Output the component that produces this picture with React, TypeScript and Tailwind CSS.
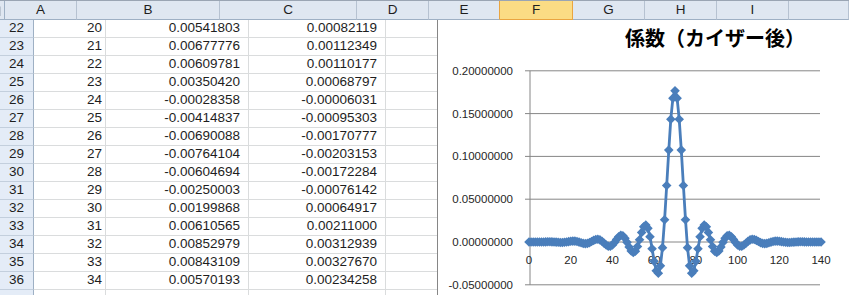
import React from 'react'

interface Col {
  label: string
  w: string
  head: string
}

const COLS: Col[] = [
  { label: 'A', w: 'w-[72px]', head: 'border-r-[#b6c2d1]' },
  { label: 'B', w: 'w-[143px]', head: 'border-r-[#b6c2d1]' },
  { label: 'C', w: 'w-[137px]', head: 'border-r-[#b6c2d1]' },
  { label: 'D', w: 'w-[72px]', head: 'border-r-[#b6c2d1]' },
  { label: 'E', w: 'w-[71px]', head: 'border-r-[#eaa540]' },
  { label: 'F', w: 'w-[73px]', head: 'border-r-[#eaa540]' },
  { label: 'G', w: 'w-[72px]', head: 'border-r-[#b6c2d1]' },
  { label: 'H', w: 'w-[72px]', head: 'border-r-[#b6c2d1]' },
  { label: 'I', w: 'w-[72px]', head: 'border-r-[#b6c2d1]' },
  { label: '', w: 'w-[60px]', head: 'border-r-[#b6c2d1]' },
]

const ROWS: [number, string, string][] = [
  [20, '0.00541803', '0.00082119'],
  [21, '0.00677776', '0.00112349'],
  [22, '0.00609781', '0.00110177'],
  [23, '0.00350420', '0.00068797'],
  [24, '-0.00028358', '-0.00006031'],
  [25, '-0.00414837', '-0.00095303'],
  [26, '-0.00690088', '-0.00170777'],
  [27, '-0.00764104', '-0.00203153'],
  [28, '-0.00604694', '-0.00172284'],
  [29, '-0.00250003', '-0.00076142'],
  [30, '0.00199868', '0.00064917'],
  [31, '0.00610565', '0.00211000'],
  [32, '0.00852979', '0.00312939'],
  [33, '0.00843109', '0.00327670'],
  [34, '0.00570193', '0.00234258'],
]

// modified bessel I0 for the kaiser window
const besselI0 = (x: number) => {
  let sum = 1
  let term = 1
  for (let k = 1; k < 30; k++) {
    term *= (x / (2 * k)) * (x / (2 * k))
    sum += term
  }
  return sum
}

const BETA = 7
const CUT = 0.1733
const coef = Array.from({ length: 141 }, (_, n) => {
  const d = n - 70
  const s = d === 0 ? CUT : Math.sin(Math.PI * CUT * d) / (Math.PI * d)
  const r = d / 70
  const w = besselI0(BETA * Math.sqrt(Math.max(0, 1 - r * r))) / besselI0(BETA)
  return 1.02 * s * w
})

const px = (i: number) => 529 + i * 2.086
const py = (v: number) => 242 - v * 856

const Y_TICKS = [0.2, 0.15, 0.1, 0.05, 0, -0.05]

function Chart() {
  const line = coef.map((v, i) => `${i === 0 ? 'M' : 'L'}${px(i).toFixed(1)},${py(v).toFixed(1)}`).join(' ')
  return (
    <div className="absolute left-[437px] top-[20px] w-[412px] h-[275px] bg-white border-l border-[#868686]">
      <svg width="411" height="275" viewBox="438 20 411 275">
        <text
          x="715"
          y="46"
          textAnchor="middle"
          fontSize="20"
          fontWeight="700"
          fontFamily='"Noto Sans CJK JP", sans-serif'
          fill="#000"
        >
          係数（カイザー後）
        </text>
        {Y_TICKS.map(v => (
          <g key={v}>
            <line x1="525" x2="820" y1={py(v)} y2={py(v)} stroke="#868686" strokeWidth="1" />
            <text
              x="513"
              y={py(v) + 4}
              textAnchor="end"
              fontSize="11.5"
              fontFamily='"Liberation Sans", sans-serif'
              fill="#262626"
            >
              {v.toFixed(8)}
            </text>
          </g>
        ))}
        <line x1="530" x2="530" y1={py(0.2)} y2={py(-0.05)} stroke="#868686" strokeWidth="1" />
        {[0, 20, 40, 60, 80, 100, 120, 140].map(t => (
          <text
            key={t}
            x={px(t)}
            y="264"
            textAnchor="middle"
            fontSize="11.5"
            fontFamily='"Liberation Sans", sans-serif'
            fill="#262626"
          >
            {t}
          </text>
        ))}
        <path d={line} fill="none" stroke="#4a7ebb" strokeWidth="2.8" strokeLinejoin="round" />
        {coef.map((v, i) => {
          const x = px(i)
          const y = py(v)
          return (
            <polygon
              key={i}
              points={`${x},${y - 4.8} ${x + 4.8},${y} ${x},${y + 4.8} ${x - 4.8},${y}`}
              fill="#4a7ebb"
            />
          )
        })}
      </svg>
    </div>
  )
}

export default function App() {
  return (
    <div className="relative w-[849px] h-[295px] overflow-hidden bg-white text-[#1e1e1e] font-['Liberation_Sans',sans-serif]">
      {/* column headers */}
      <div className="flex h-[20px] border-t border-[#9aa5b3]">
        <div className="relative w-[34px] h-full bg-[#dfe7f1] border-r border-b border-[#9eb0c4]">
          <div className="absolute right-[3px] bottom-[3px] w-0 h-0 border-l-[10px] border-l-transparent border-b-[10px] border-b-[#bcc6d2]" />
        </div>
        {COLS.map(c => (
          <div
            key={c.label + c.w}
            className={`${c.w} ${c.head} h-full shrink-0 border-r flex items-center justify-center text-[13.5px] ${
              c.label === 'F'
                ? 'bg-[#fbdc84] border-b border-b-[#eaa540]'
                : 'bg-[#dfe7f1] border-b border-b-[#9eb0c4]'
            }`}
          >
            {c.label}
          </div>
        ))}
      </div>

      {/* rows */}
      {[...ROWS, null].map((r, ri) => (
        <div key={ri} className="flex h-[18px]">
          <div className="w-[34px] h-full shrink-0 bg-[#e4ecf7] border-r border-r-[#9eb0c4] border-b border-b-[#c3cfdd] flex items-center justify-center text-[13.5px]">
            {r ? 22 + ri : ''}
          </div>
          {COLS.map((c, ci) => (
            <div
              key={ci}
              className={`${c.w} h-full shrink-0 border-r border-b border-[#dadcdd] flex items-center justify-end text-[13.5px] ${
                ci === 0 ? 'pr-[3px]' : 'pr-[8px]'
              }`}
            >
              {r && ci === 0 && r[0]}
              {r && ci === 1 && r[1]}
              {r && ci === 2 && r[2]}
            </div>
          ))}
        </div>
      ))}

      <Chart />
    </div>
  )
}
